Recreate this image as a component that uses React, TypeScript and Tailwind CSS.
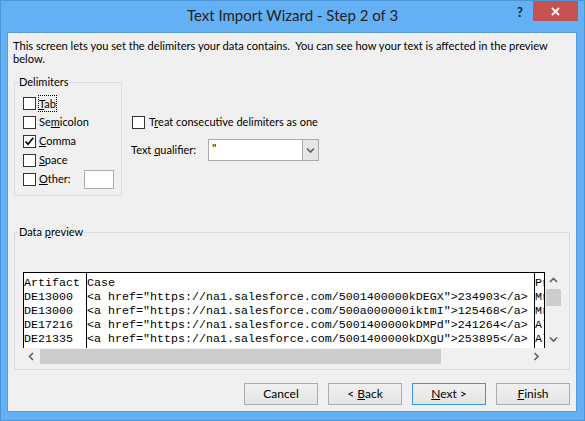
import type { ReactNode } from 'react';

const sans = "font-['Lato','Liberation_Sans',sans-serif]";

function U({ children }: { children: ReactNode }) {
  return <span className="underline decoration-1 underline-offset-[1px]">{children}</span>;
}

function Check({ checked = false }: { checked?: boolean }) {
  return (
    <div className="w-[13px] h-[13px] shrink-0 border border-[#333333] bg-white flex items-center justify-center">
      {checked && (
        <svg width="11" height="11" viewBox="0 0 11 11">
          <path d="M1.5 5.5 L4 8.2 L9.3 1.8" fill="none" stroke="#000" strokeWidth="1.7" />
        </svg>
      )}
    </div>
  );
}

function Chevron({ dir }: { dir: 'up' | 'down' | 'left' | 'right' }) {
  const d = {
    up: 'M1 5 L4.5 1.5 L8 5',
    down: 'M1 1.5 L4.5 5 L8 1.5',
    left: 'M5 1 L1.5 4.5 L5 8',
    right: 'M1.5 1 L5 4.5 L1.5 8',
  }[dir];
  const horiz = dir === 'up' || dir === 'down';
  return (
    <svg width={horiz ? 9 : 7} height={horiz ? 7 : 9} viewBox={horiz ? '0 0 9 7' : '0 0 7 9'}>
      <path d={d} fill="none" stroke="#606060" strokeWidth="1.6" />
    </svg>
  );
}

function Button({ children, focused = false }: { children: ReactNode; focused?: boolean }) {
  return (
    <div
      className={`w-[74px] h-[22px] flex items-center justify-center text-[12px] bg-gradient-to-b from-[#f0f0f0] to-[#e5e5e5] border ${
        focused ? 'border-[#3c96e8]' : 'border-[#acacac]'
      }`}
    >
      <span>{children}</span>
    </div>
  );
}

const col1 = ['Artifact', 'DE13000', 'DE13000', 'DE17216', 'DE21335'];
const col2 = [
  'Case',
  '<a href="https://na1.salesforce.com/5001400000kDEGX">234903</a>',
  '<a href="https://na1.salesforce.com/500a000000iktmI">125468</a>',
  '<a href="https://na1.salesforce.com/5001400000kDMPd">241264</a>',
  '<a href="https://na1.salesforce.com/5001400000kDXgU">253895</a>',
];
const col3 = ['Pr', 'Mr', 'Mr', 'Al', 'Al'];

function PreviewColumn({ rows, className }: { rows: string[]; className: string }) {
  return (
    <div className={`h-full overflow-hidden whitespace-pre pt-[3px] ${className}`}>
      {rows.map((r, i) => (
        <div key={i} className="h-[14px] leading-[14px]">
          {r}
        </div>
      ))}
    </div>
  );
}

export default function App() {
  return (
    <div className={`w-[585px] h-[421px] bg-[#64b0f4] border border-[#4b94d6] flex flex-col text-black ${sans}`}>
      {/* title bar */}
      <div className="h-[31px] shrink-0 grid grid-cols-[1fr_auto_1fr]">
        <div />
        <div className="text-[15px] leading-[29px] text-[#222222]">Text Import Wizard - Step 2 of 3</div>
        <div className="flex justify-end items-start pr-[6px]">
          <div className="mt-[5px] mr-[10px] text-[13px] leading-[12px] font-bold text-[#222222]">?</div>
          <div className="w-[45px] h-[20px] bg-[#c75050] flex items-center justify-center">
            <svg width="9" height="9" viewBox="0 0 9 9">
              <path d="M1 1 L8 8 M8 1 L1 8" stroke="#fff" strokeWidth="1.8" />
            </svg>
          </div>
        </div>
      </div>

      {/* client area */}
      <div className="flex-1 ml-[6px] mr-[7px] mb-[8px] bg-[#f0f0f0] border border-[#5a9cd8] flex flex-col text-[11px]">
        <p className="pl-[5px] pt-[6px] leading-[13px] text-[11.1px]">
          This screen lets you set the delimiters your data contains.{'\u00a0 '}You can see how your text is affected in the preview
          <br />
          below.
        </p>

        <div className="flex items-start mt-[10px] pl-[6px]">
          <fieldset className="w-[108px] border border-[#dcdcdc]">
            <legend className="ml-[3px] px-[1px] leading-[14px]">Delimiters</legend>
            <div className="flex flex-col pl-[8px] pt-[5px] pb-[6px]">
              <div className="h-[19px] flex items-center">
                <Check />
                <span className="ml-[2px] border border-dotted border-black leading-[15px]">
                  <U>T</U>ab
                </span>
              </div>
              <div className="h-[19px] flex items-center gap-[3px]">
                <Check />
                <span>
                  Se<U>m</U>icolon
                </span>
              </div>
              <div className="h-[19px] flex items-center gap-[3px]">
                <Check checked />
                <span>
                  <U>C</U>omma
                </span>
              </div>
              <div className="h-[19px] flex items-center gap-[3px]">
                <Check />
                <span>
                  <U>S</U>pace
                </span>
              </div>
              <div className="h-[19px] flex items-center gap-[3px]">
                <Check />
                <span className="w-[42px]">
                  <U>O</U>ther:
                </span>
                <div className="w-[30px] h-[19px] bg-white border border-[#abadb3]" />
              </div>
            </div>
          </fieldset>

          <div className="ml-[9px] mt-[41px] flex flex-col">
            <div className="flex items-center pl-[1px] h-[13px]">
              <Check />
              <span className="ml-[4px]">
                T<U>r</U>eat consecutive delimiters as one
              </span>
            </div>
            <div className="flex items-center mt-[10px]">
              <span className="w-[77px]">
                Text <U>q</U>ualifier:
              </span>
              <div className="w-[111px] h-[22px] bg-white border border-[#acacac] flex">
                <div className="flex-1 pl-[3px] pt-[1px] text-[12px] leading-[14px]">"</div>
                <div className="w-[16px] h-full bg-[#e6e6e6] border-l border-[#acacac] flex items-center justify-center">
                  <Chevron dir="down" />
                </div>
              </div>
            </div>
          </div>
        </div>

        <fieldset className="mt-[29px] ml-[6px] w-[556px] border border-[#dcdcdc]">
          <legend className="ml-[3px] px-[1px] leading-[14px]">
            Data <U>p</U>review
          </legend>
          <div className="pl-[8px] pt-[33px] pb-[4px]">
            <div className="w-[539px] flex flex-col">
              <div className="flex h-[76px]">
                <div className="w-[522px] h-full bg-white border-l border-t border-r border-black flex font-['Liberation_Mono',monospace] text-[11.67px]">
                  <PreviewColumn rows={col1} className="w-[63px] border-r border-black" />
                  <PreviewColumn rows={col2} className="w-[448px] border-r border-black" />
                  <PreviewColumn rows={col3} className="flex-1" />
                </div>
                <div className="w-[17px] h-full flex flex-col items-center bg-[#f0f0f0]">
                  <div className="h-[17px] flex items-center justify-center">
                    <Chevron dir="up" />
                  </div>
                  <div className="w-[15px] h-[17px] bg-[#cdcdcd]" />
                  <div className="flex-1" />
                  <div className="h-[17px] flex items-center justify-center">
                    <Chevron dir="down" />
                  </div>
                </div>
              </div>
              <div className="flex h-[17px]">
                <div className="w-[522px] h-full flex items-center bg-[#f0f0f0]">
                  <div className="w-[17px] h-full flex items-center justify-center">
                    <Chevron dir="left" />
                  </div>
                  <div className="w-[401px] h-[15px] bg-[#cdcdcd]" />
                  <div className="flex-1" />
                  <div className="w-[17px] h-full flex items-center justify-center">
                    <Chevron dir="right" />
                  </div>
                </div>
                <div className="w-[17px] h-full bg-[#f0f0f0]" />
              </div>
            </div>
          </div>
        </fieldset>

        <div className="mt-[13px] pr-[6px] flex justify-end gap-[10px]">
          <Button>Cancel</Button>
          <Button>
            &lt; <U>B</U>ack
          </Button>
          <Button focused>
            <U>N</U>ext &gt;
          </Button>
          <Button>
            <U>F</U>inish
          </Button>
        </div>
      </div>
    </div>
  );
}
